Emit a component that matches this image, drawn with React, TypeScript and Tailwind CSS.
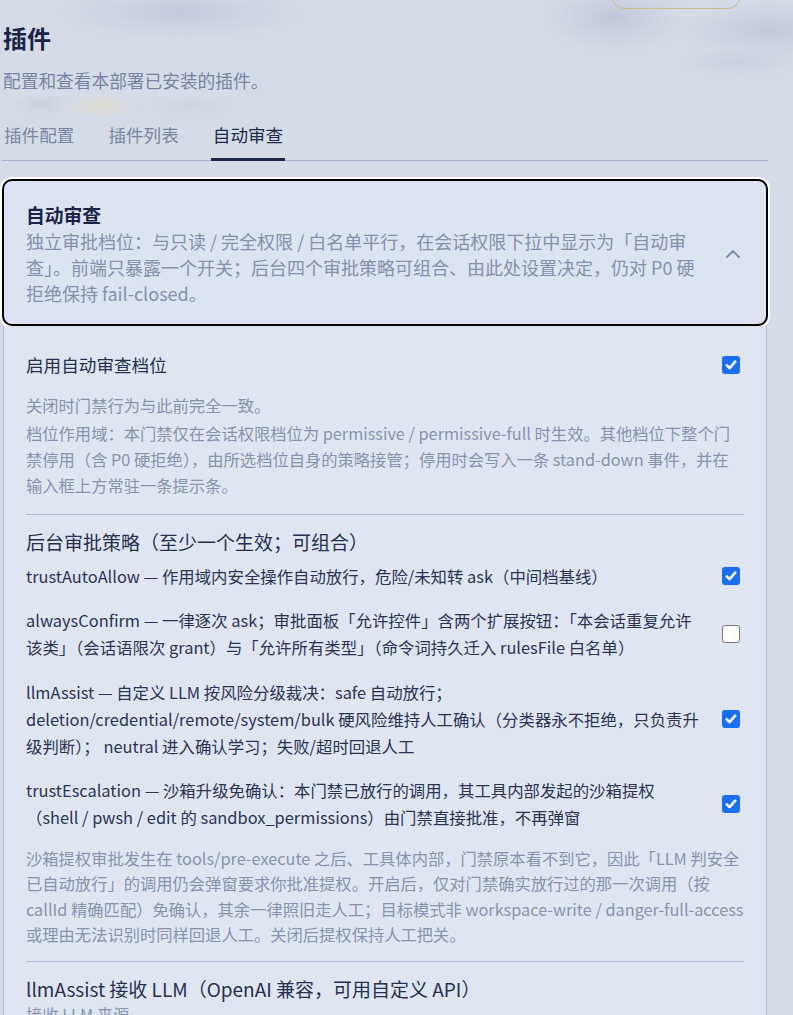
import React from 'react';

interface Policy {
  lines: string[];
  checked: boolean;
}

const policies: Policy[] = [
  {
    lines: ['trustAutoAllow — 作用域内安全操作自动放行，危险/未知转 ask（中间档基线）'],
    checked: true,
  },
  {
    lines: [
      'alwaysConfirm — 一律逐次 ask；审批面板「允许控件」含两个扩展按钮：「本会话重复允许',
      '该类」（会话语限次 grant）与「允许所有类型」（命令词持久迁入 rulesFile 白名单）',
    ],
    checked: false,
  },
  {
    lines: [
      'llmAssist — 自定义 LLM 按风险分级裁决：safe 自动放行；',
      'deletion/credential/remote/system/bulk 硬风险维持人工确认（分类器永不拒绝，只负责升',
      '级判断）； neutral 进入确认学习；失败/超时回退人工',
    ],
    checked: true,
  },
  {
    lines: [
      'trustEscalation — 沙箱升级免确认：本门禁已放行的调用，其工具内部发起的沙箱提权',
      '（shell / pwsh / edit 的 sandbox_permissions）由门禁直接批准，不再弹窗',
    ],
    checked: true,
  },
];

function Lines({ lines }: { lines: string[] }) {
  return (
    <>
      {lines.map((line, i) => (
        <span key={i} className="block whitespace-nowrap">
          {line}
        </span>
      ))}
    </>
  );
}

function Checkbox({ checked }: { checked: boolean }) {
  if (!checked) {
    return (
      <span className="mr-[4px] block h-[18px] w-[18px] shrink-0 rounded-[3px] border-[1.5px] border-[#767676] bg-white" />
    );
  }
  return (
    <span className="mr-[4px] flex h-[18px] w-[18px] shrink-0 items-center justify-center rounded-[3px] bg-[#1a6ef4]">
      <svg width="12" height="12" viewBox="0 0 12 12" fill="none">
        <path d="M1.8 6.3l2.8 2.8 5.6-6.4" stroke="white" strokeWidth="2.6" strokeLinecap="round" strokeLinejoin="round" />
      </svg>
    </span>
  );
}

export default function App() {
  return (
    <div className="min-h-screen overflow-hidden bg-[#d6dce7] bg-[radial-gradient(ellipse_120px_28px_at_180px_12px,rgba(176,186,210,0.55),transparent),radial-gradient(ellipse_70px_34px_at_615px_18px,rgba(170,178,198,0.5),transparent),radial-gradient(ellipse_90px_30px_at_770px_30px,rgba(176,184,204,0.55),transparent),radial-gradient(ellipse_60px_14px_at_740px_62px,rgba(186,194,212,0.5),transparent),radial-gradient(ellipse_26px_10px_at_42px_104px,rgba(190,196,210,0.6),transparent),radial-gradient(ellipse_36px_12px_at_102px_106px,rgba(226,220,204,0.8),transparent),radial-gradient(ellipse_40px_10px_at_190px_106px,rgba(200,206,220,0.5),transparent)] font-['Noto_Sans_CJK_SC',sans-serif]">
      <div className="w-[766px] pl-[2px] box-content">
        {/* header toolbar (cut off at top) */}
        <div className="flex justify-end pr-[28px]">
          <div className="-mt-[31px] h-[40px] w-[128px] rounded-[12px] border border-[#cdbb90]" />
        </div>

        <h1 className="mt-[13px] pl-[1px] text-[24px] font-bold leading-[32px] text-[#1a2446]">插件</h1>
        <p className="mt-[13px] pl-[1px] text-[17.7px] leading-[26px] text-[#7683a3]">配置和查看本部署已安装的插件。</p>

        {/* tabs */}
        <div className="mt-[29px] flex gap-[30px] border-b border-[#a9b3cf]">
          <button className="px-[2px] pb-[12px] text-[17.6px] leading-[26px] text-[#7a86a3]">插件配置</button>
          <button className="px-[2px] pb-[12px] text-[17.6px] leading-[26px] text-[#7a86a3]">插件列表</button>
          <button className="-mb-px border-b-[3px] border-[#1c2749] px-[2px] pb-[10px] text-[17.6px] leading-[26px] text-[#1e2a4a]">
            自动审查
          </button>
        </div>

        {/* accordion card */}
        <div className="mt-[18px]">
          <div className="flex items-center gap-4 rounded-[10px] border-2 border-black bg-[#dce3f1] pb-[18px] pl-[22px] pr-[26px] pt-[21px] ring-2 ring-white">
            <div className="flex-1">
              <h2 className="text-[18.8px] font-bold leading-[26px] text-[#1a2446]">自动审查</h2>
              <p className="text-[18px] leading-[26px] text-[#8591ad]">
                <Lines
                  lines={[
                    '独立审批档位：与只读 / 完全权限 / 白名单平行，在会话权限下拉中显示为「自动审',
                    '查」。前端只暴露一个开关；后台四个审批策略可组合、由此处设置决定，仍对 P0 硬',
                    '拒绝保持 fail-closed。',
                  ]}
                />
              </p>
            </div>
            <svg width="14" height="8" viewBox="0 0 14 8" fill="none" className="shrink-0">
              <path d="M1 7l6-6 6 6" stroke="#7d88a5" strokeWidth="1.8" strokeLinecap="round" strokeLinejoin="round" />
            </svg>
          </div>

          <div className="mx-px border-x border-[#b3bedb] bg-[#dfe6f2] px-[22px]">
            {/* enable */}
            <div className="border-b border-[#b3bdd7] pb-[16px] pt-[26px]">
              <div className="flex items-center justify-between">
                <span className="text-[17.6px] leading-[26px] text-[#27304f]">启用自动审查档位</span>
                <Checkbox checked />
              </div>
              <p className="mt-[14px] text-[16.3px] leading-[26px] text-[#8893ae]">关闭时门禁行为与此前完全一致。</p>
              <p className="mt-[2px] text-[16.3px] leading-[26px] text-[#8893ae]">
                <Lines
                  lines={[
                    '档位作用域：本门禁仅在会话权限档位为 permissive / permissive-full 时生效。其他档位下整个门',
                    '禁停用（含 P0 硬拒绝），由所选档位自身的策略接管；停用时会写入一条 stand-down 事件，并在',
                    '输入框上方常驻一条提示条。',
                  ]}
                />
              </p>
            </div>

            {/* policies */}
            <div className="border-b border-[#b3bdd7] pb-[14px] pt-[14px]">
              <h3 className="text-[19px] leading-[26px] text-[#27304f]">后台审批策略（至少一个生效；可组合）</h3>
              <div className="mt-[7.5px] flex flex-col gap-[17.5px]">
                {policies.map((p, i) => (
                  <div key={i} className="flex items-center justify-between">
                    <div className="text-[16.4px] leading-[27px] text-[#2b3455]">
                      <Lines lines={p.lines} />
                    </div>
                    <Checkbox checked={p.checked} />
                  </div>
                ))}
              </div>
              <p className="mt-[15px] text-[16.3px] leading-[25.3px] text-[#8893ae]">
                <Lines
                  lines={[
                    '沙箱提权审批发生在 tools/pre-execute 之后、工具体内部，门禁原本看不到它，因此「LLM 判安全',
                    '已自动放行」的调用仍会弹窗要求你批准提权。开启后，仅对门禁确实放行过的那一次调用（按',
                    'callId 精确匹配）免确认，其余一律照旧走人工；目标模式非 workspace-write / danger-full-access',
                    '或理由无法识别时同样回退人工。关闭后提权保持人工把关。',
                  ]}
                />
              </p>
            </div>

            {/* llm source */}
            <div className="pb-[40px] pt-[14px]">
              <h3 className="text-[19px] leading-[26px] text-[#27304f]">llmAssist 接收 LLM（OpenAI 兼容，可用自定义 API）</h3>
              <p className="text-[16.3px] leading-[25px] text-[#8893ae]">接收 LLM 来源</p>
            </div>
          </div>
        </div>
      </div>
    </div>
  );
}
